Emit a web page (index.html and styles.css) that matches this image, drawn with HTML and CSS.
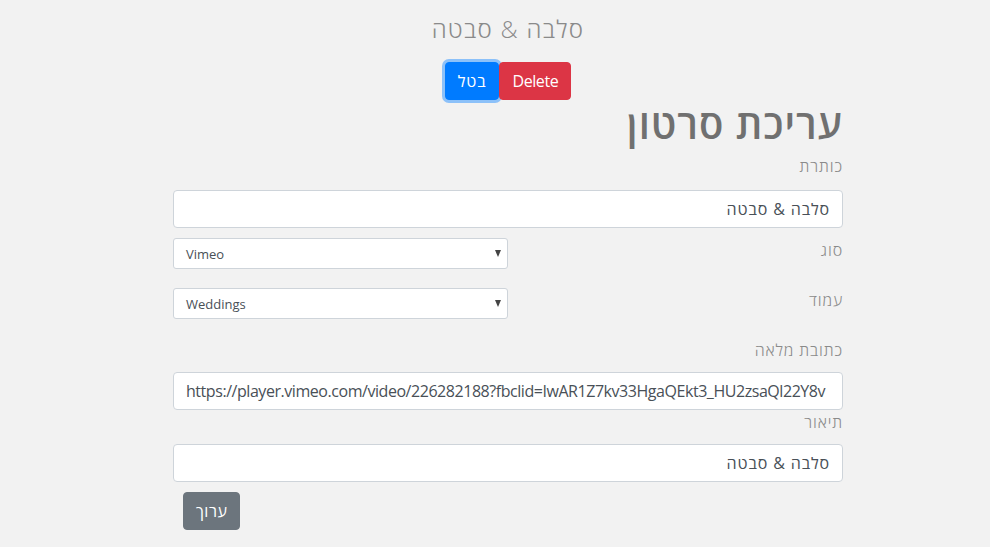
FILE: index.html
```html
<!DOCTYPE html>
<html lang="he" dir="rtl">
<head>
<meta charset="utf-8">
<title>עריכת סרטון</title>
<link rel="stylesheet" href="styles.css">
</head>
<body>
<div class="page">
  <h3 class="title he">סלבה &amp; סבטה</h3>
  <div class="actions" dir="ltr">
    <button class="btn btn-primary focus he">בטל</button><button class="btn btn-danger">Delete</button>
  </div>
  <h1 class="heading he">עריכת סרטון</h1>
  <form class="form">
    <label class="label lbl-title he">כותרת</label>
    <input class="control he" type="text" value="סלבה &amp; סבטה">
    <div class="row row-type">
      <label class="label row-label he">סוג</label>
      <div class="select" dir="ltr"><span>Vimeo</span><span class="caret"></span></div>
    </div>
    <div class="row row-page">
      <label class="label row-label he">עמוד</label>
      <div class="select" dir="ltr"><span>Weddings</span><span class="caret"></span></div>
    </div>
    <label class="label lbl-url he">כתובת מלאה</label>
    <input class="control url" dir="ltr" type="text" value="https://player.vimeo.com/video/226282188?fbclid=IwAR1Z7kv33HgaQEkt3_HU2zsaQl22Y8v">
    <label class="label lbl-desc he">תיאור</label>
    <input class="control he" type="text" value="סלבה &amp; סבטה">
    <div class="submit-row">
      <button type="button" class="btn btn-secondary he">ערוך</button>
    </div>
  </form>
</div>
</body>
</html>
```
FILE: styles.css
```css
* { box-sizing: border-box; }
html, body { margin: 0; padding: 0; }
body {
  background: #f2f2f2;
  font-family: "Open Sans", "DejaVu Sans", sans-serif;
  color: #495057;
}
.he { letter-spacing: 0.055em; }
.page {
  width: 670px;
  margin: 0 147px 0 auto;
  padding-top: 14px;
}
.title {
  margin: 0;
  text-align: center;
  font-size: 24px;
  font-weight: 300;
  line-height: 30px;
  color: #8a8a8a;
}
.actions {
  display: flex;
  justify-content: center;
  margin-top: 18px;
}
.btn {
  font-family: inherit;
  font-size: 16px;
  line-height: 24px;
  padding: 6px 12px;
  border: 1px solid transparent;
  border-radius: 4px;
  color: #fff;
  cursor: pointer;
}
.btn-primary { background: #007bff; border-color: #007bff; }
.btn-primary.focus { box-shadow: 0 0 0 3px rgba(38, 143, 255, 0.5); }
.btn-danger { background: #dc3545; border-color: #dc3545; letter-spacing: -0.4px; }
.btn-secondary { background: #6c757d; border-color: #6c757d; letter-spacing: 0.03em; }
.heading {
  margin: 0;
  font-size: 40px;
  line-height: 48px;
  font-weight: 600;
  color: #707070;
  text-align: right;
  letter-spacing: 0.025em;
}
.form { display: flex; flex-direction: column; }
.label {
  display: block;
  font-size: 16px;
  line-height: 24px;
  color: #8a8a8a;
  font-weight: 300;
}
.lbl-title { margin: 6px 0 12px; }
.control {
  display: block;
  width: 100%;
  height: 38px;
  padding: 6px 12px;
  font-family: inherit;
  font-size: 16px;
  line-height: 24px;
  color: #495057;
  background: #fff;
  border: 1px solid #ced4da;
  border-radius: 4px;
  text-align: right;
}
.control.url { text-align: left; letter-spacing: -0.45px; }
.row {
  display: grid;
  grid-template-columns: 1fr 1fr;
  align-items: start;
}
.row-type { margin-top: 10px; }
.row-page { margin-top: 19px; }
.row-label { grid-column: 1; grid-row: 1; }
.select {
  grid-column: 2;
  height: 31px;
  display: flex;
  align-items: center;
  justify-content: space-between;
  padding: 0 6px 0 12px;
  background: #fff;
  border: 1px solid #ced4da;
  border-radius: 3px;
  font-size: 13px;
  color: #495057;
}
.caret {
  width: 0; height: 0;
  border-left: 3.5px solid transparent;
  border-right: 3.5px solid transparent;
  border-top: 7px solid #444;
}
.lbl-url { margin: 19px 0 10px; }
.lbl-desc { margin: 0 0 10px; }
.submit-row {
  display: flex;
  justify-content: flex-end;
  padding-left: 10px;
  margin-top: 10px;
}
```
